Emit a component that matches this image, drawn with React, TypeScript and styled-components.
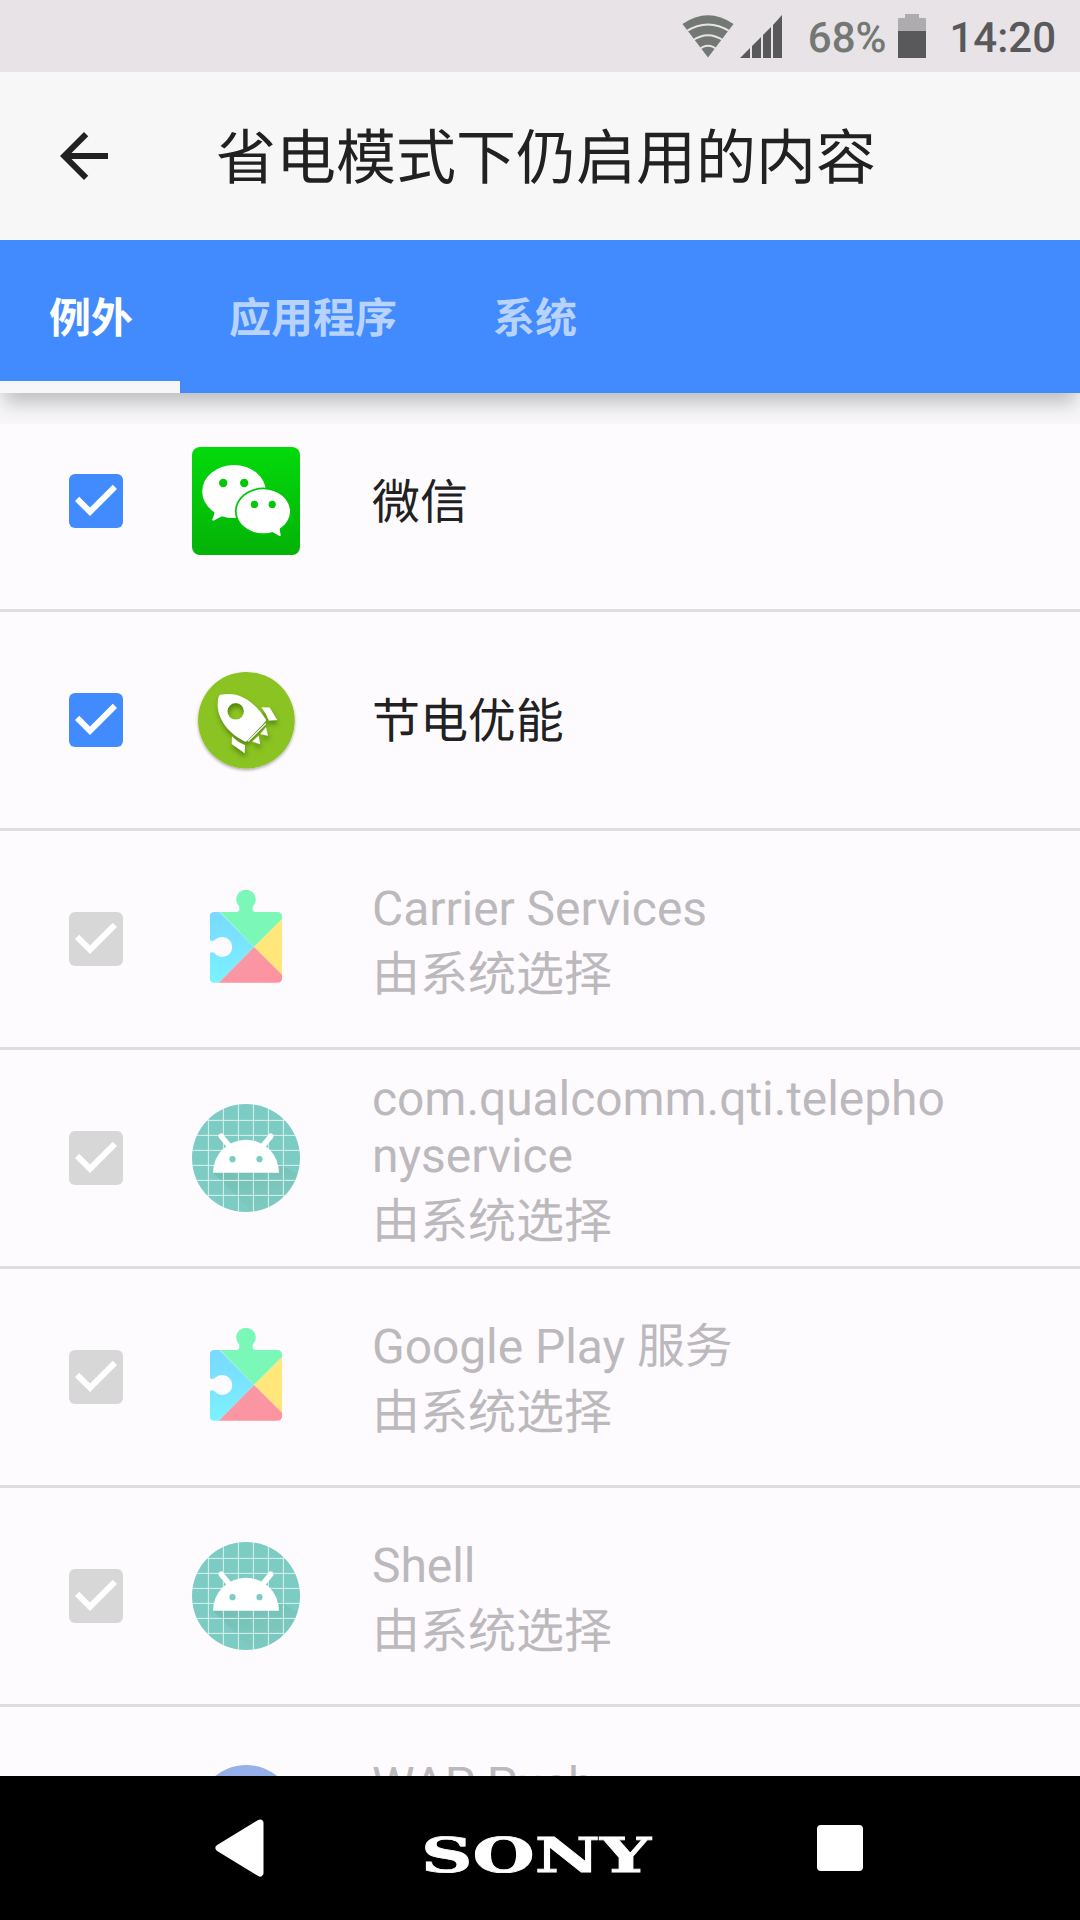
import React from 'react';
import styled, { createGlobalStyle } from 'styled-components';

const GlobalStyle = createGlobalStyle`
  *, *::before, *::after { box-sizing: border-box; }
  body {
    margin: 0;
    background: #fefbff;
    font-family: Roboto, "Noto Sans CJK SC", sans-serif;
    text-rendering: geometricPrecision;
    -webkit-font-smoothing: antialiased;
  }
`;

const Screen = styled.div`
  display: flex;
  flex-direction: column;
  width: 1080px;
  height: 1920px;
  overflow: hidden;
  background: #fefbff;
`;

const StatusBar = styled.div`
  display: flex;
  flex: none;
  align-items: center;
  height: 72px;
  padding-right: 24px;
  justify-content: flex-end;
  background: #e7e3e7;
`;

const StatusIcon = styled.svg<{ $gap: number }>`
  flex: none;
  margin-right: ${(p) => p.$gap}px;
`;

const StatusText = styled.span<{ $color: string; $gap?: number }>`
  font-size: 42px;
  font-weight: 500;
  line-height: 70px;
  padding-top: 5px;
  color: ${(p) => p.$color};
  margin-right: ${(p) => p.$gap ?? 0}px;
`;

const Toolbar = styled.header`
  display: flex;
  flex: none;
  align-items: center;
  gap: 96px;
  height: 168px;
  padding-left: 48px;
  background: #f7f7f7;
  color: #212121;
`;

const BackButton = styled.button`
  display: flex;
  padding: 0;
  border: 0;
  background: none;
  color: inherit;
`;

const Title = styled.h1`
  margin: 0;
  padding-top: 6px;
  font-size: 60px;
  font-weight: 400;
  line-height: 84px;
`;

const Tabs = styled.nav`
  position: relative;
  z-index: 1;
  display: flex;
  flex: none;
  height: 153px;
  background: #428bff;
`;

const Tab = styled.div<{ $active?: boolean }>`
  display: flex;
  align-items: center;
  padding: 18px 47px 0 49px;
  border-bottom: 12px solid ${(p) => (p.$active ? '#f7f7f7' : 'transparent')};
  font-size: 42px;
  font-weight: 700;
  line-height: 60px;
  color: ${(p) => (p.$active ? '#ffffff' : '#b9d3ff')};
`;

const TabShadow = styled.div`
  position: absolute;
  top: 100%;
  left: 0;
  right: 0;
  height: 31px;
  overflow: hidden;
  background: #f7f6f9;

  &::before {
    content: '';
    position: absolute;
    left: 4px;
    right: 4px;
    top: -60px;
    height: 60px;
    box-shadow: 0 10px 18px rgba(0, 0, 0, 0.23);
  }
`;

const List = styled.main`
  flex: 1;
  min-height: 0;
  overflow: hidden;
`;

const Row = styled.div`
  display: flex;
  align-items: center;
  height: 219px;
  padding: 0 120px 0 69px;
  border-bottom: 3px solid #dfdde0;
`;

const CheckBox = styled.span<{ $disabled: boolean }>`
  display: flex;
  flex: none;
  width: 54px;
  height: 54px;
  margin-right: 69px;
  border-radius: 6px;
  background: ${(p) => (p.$disabled ? '#d7d7d7' : '#428bff')};
`;

const AppIcon = styled.svg`
  flex: none;
  width: 108px;
  height: 108px;
  margin-right: 72px;
  overflow: visible;
`;

const Labels = styled.div<{ $disabled: boolean }>`
  display: flex;
  flex: 1;
  flex-direction: column;
  min-width: 0;
  padding-top: ${(p) => (p.$disabled ? 0 : 3)}px;
  font-size: 48px;
  word-break: break-all;
  color: ${(p) => (p.$disabled ? '#bcb9bc' : '#212121')};
`;

const Name = styled.span`
  letter-spacing: -0.07px;
  line-height: 57px;
`;

const Summary = styled.span`
  height: 62px;
  padding-top: 14px;
  line-height: 48px;
`;

const NavBar = styled.footer`
  display: flex;
  flex: none;
  align-items: center;
  height: 144px;
  padding: 0 217px 0 215px;
  justify-content: space-between;
  background: #000000;
`;

const Recents = styled.span`
  width: 46px;
  height: 46px;
  border-radius: 4px;
  background: #ffffff;
`;

const Check = () => (
  <svg width="54" height="54" viewBox="3 3 18 18">
    <path d="M10 17l-5-5 1.41-1.41L10 14.17l7.59-7.59L19 8z" fill="#fff" />
  </svg>
);

const WeChatIcon = () => (
  <AppIcon viewBox="0 0 108 108">
    <defs>
      <linearGradient id="wechat" x1="0" y1="0" x2="0" y2="1">
        <stop offset="0" stopColor="#02da0b" />
        <stop offset="1" stopColor="#04b208" />
      </linearGradient>
    </defs>
    <rect width="108" height="108" rx="8" fill="url(#wechat)" />
    <path d="M22.7 62Q22.5 69 20 72.5Q20.6 74.3 22.3 73.3L30 69.3Q36 71.2 43 70.8L56 60L40 40Z" fill="#fff" />
    <ellipse cx="42" cy="44.4" rx="31.8" ry="26.5" fill="#fff" />
    <ellipse cx="71.3" cy="64.3" rx="28.4" ry="23.7" fill="#03c40a" />
    <ellipse cx="71.3" cy="64.3" rx="26.7" ry="22" fill="#fff" />
    <path d="M80 84.8L87.5 89Q89 89.3 88.7 87.7Q87.4 84 87.8 80L80 76Z" fill="#fff" />
    <g fill="#03c80a">
      <circle cx="31.2" cy="36" r="4.2" />
      <circle cx="52.2" cy="36" r="4.2" />
      <circle cx="62.4" cy="57.4" r="3.6" />
      <circle cx="80.2" cy="57.4" r="3.6" />
    </g>
  </AppIcon>
);

const RocketIcon = () => (
  <AppIcon viewBox="0 0 108 108">
    <defs>
      <filter id="discShadow" x="-10%" y="-10%" width="120%" height="125%">
        <feDropShadow dx="0" dy="1.5" stdDeviation="1.5" floodColor="#000" floodOpacity="0.35" />
      </filter>
      <filter id="rocketShadow" x="-20%" y="-20%" width="150%" height="150%">
        <feDropShadow dx="1" dy="4" stdDeviation="2.5" floodColor="#2c5a00" floodOpacity="0.6" />
      </filter>
    </defs>
    <circle cx="54.4" cy="54.2" r="48.3" fill="#8bc320" filter="url(#discShadow)" />
    <g fill="#fff" filter="url(#rocketShadow)">
      <path
        fillRule="evenodd"
        d="M28.5 28.8Q36 27.2 43 28.4Q61 33 73.8 53.5Q74.2 54.6 73.4 55.6L54.6 75.2Q53.6 76 52 75C38 68 26.5 55 25.7 40Q25.6 33 27 30Q27.4 29 28.5 28.8ZM43.7 37A8.3 8.3 0 1 0 43.7 53.6A8.3 8.3 0 1 0 43.7 37Z"
      />
      <path d="M69.4 41.2L77.6 41.6L85.2 54L76.8 54.4Q74.4 47.5 69.4 41.2Z" />
      <path d="M40 70.6L39.8 78L52.7 87.2L53 79.2Q45.5 76.4 40 70.6Z" />
      <path d="M60.3 75.4L66.6 69.8L68.2 78.3Z" />
      <path d="M68.3 68L74 61.2L75.9 69.8Z" />
    </g>
    <path d="M56 75.4L73.8 57.6" stroke="#fff" strokeWidth="1.3" />
  </AppIcon>
);

const PuzzleIcon = ({ id }: { id: string }) => (
  <AppIcon viewBox="0.4 0 108 108">
    <defs>
      <clipPath id={`piece-${id}`}>
        <path d="M23 27H44.5Q48.8 27 47.5 21.5A9.8 9.8 0 1 1 61.3 21.5Q60 27 64.3 27H85.5Q90.5 27 90.5 32V92.7Q90.5 97.7 85.5 97.7H23Q18 97.7 18 92.7V70Q18 66.3 22.5 67.8L24.5 69.8A10 10 0 1 0 24.5 54L22.5 55.6Q18 57.2 18 53.5V32Q18 27 23 27Z" />
      </clipPath>
      <linearGradient id={`blue-${id}`} x1="0" y1="0" x2="0" y2="1">
        <stop offset="0" stopColor="#79d5ff" />
        <stop offset="1" stopColor="#7bf2ff" />
      </linearGradient>
      <linearGradient id={`red-${id}`} x1="0" y1="0" x2="1" y2="1">
        <stop offset="0" stopColor="#f59ba6" />
        <stop offset="1" stopColor="#ff919f" />
      </linearGradient>
    </defs>
    <g clipPath={`url(#piece-${id})`}>
      <path d="M18 17L62.5 62L27 98H18Z" fill={`url(#blue-${id})`} />
      <path d="M18 0V16.6L28.4 27L62.5 62L91 33.5V0Z" fill="#7bf8b7" />
      <path d="M91 33.5L62.5 62L91 91Z" fill="#ffe77c" />
      <path d="M27 98L62.5 62L91 90.5V98Z" fill={`url(#red-${id})`} />
    </g>
  </AppIcon>
);

const gridLines = [16.4, 31.4, 46.4, 61.4, 76.4, 91.4];

const AndroidIcon = ({ id }: { id: string }) => (
  <AppIcon viewBox="0 0 108 108">
    <defs>
      <clipPath id={`disc-${id}`}>
        <circle cx="54" cy="54" r="54" />
      </clipPath>
      <linearGradient id={`cast-${id}`} x1="0" y1="0" x2="0.6" y2="1">
        <stop offset="0" stopColor="#5d9d90" stopOpacity="0.4" />
        <stop offset="1" stopColor="#7bb9a8" stopOpacity="0.1" />
      </linearGradient>
    </defs>
    <g clipPath={`url(#disc-${id})`}>
      <rect width="108" height="108" fill="#7dccc4" />
      <path d="M21 68.7L60 108H108V72L85.5 58Z" fill={`url(#cast-${id})`} />
      <g stroke="#d9f2ef" strokeWidth="1">
        {gridLines.map((v) => (
          <path key={v} d={`M${v} 0V108M0 ${v}H108`} />
        ))}
      </g>
    </g>
    <path d="M21 68.7A33 33 0 0 1 87 68.7Z" fill="#fff" />
    <path d="M29.2 32.2L38 43M78.8 32.2L70 43" stroke="#fff" strokeWidth="5.4" strokeLinecap="round" />
    <circle cx="40.5" cy="55.2" r="3.1" fill="#7dccc4" />
    <circle cx="67.5" cy="55.2" r="3.1" fill="#7dccc4" />
  </AppIcon>
);

const BlueDiscIcon = () => (
  <AppIcon viewBox="0 0 108 108">
    <circle cx="54.2" cy="53" r="49" fill="#96b1ea" />
  </AppIcon>
);

interface AppEntry {
  name: string;
  icon: React.ReactNode;
  locked?: boolean;
  summary?: string;
}

const bySystem = '由系统选择';

const apps: AppEntry[] = [
  { name: '微信', icon: <WeChatIcon /> },
  { name: '节电优能', icon: <RocketIcon /> },
  { name: 'Carrier Services', icon: <PuzzleIcon id="carrier" />, locked: true, summary: bySystem },
  { name: 'com.qualcomm.qti.telephonyservice', icon: <AndroidIcon id="telephony" />, locked: true, summary: bySystem },
  { name: 'Google Play 服务', icon: <PuzzleIcon id="play" />, locked: true, summary: bySystem },
  { name: 'Shell', icon: <AndroidIcon id="shell" />, locked: true, summary: bySystem },
  { name: 'WAP Push', icon: <BlueDiscIcon />, locked: true },
];

export default function App() {
  return (
    <>
      <GlobalStyle />
      <Screen>
        <StatusBar>
          <StatusIcon $gap={6} width="52" height="43" viewBox="0 0 52 43">
            <defs>
              <clipPath id="fan">
                <path d="M0 9Q26 -9 52 9L26 43Z" />
              </clipPath>
            </defs>
            <path d="M0.5 9Q26 -8.5 51.5 9L26 42.5Z" fill="#747874" />
            <g clipPath="url(#fan)" fill="none" stroke="#e7e3e7" strokeWidth="2">
              <path d="M4 16.5Q26 2.5 48 16.5" />
              <path d="M10 26Q26 14.5 42 26" />
              <path d="M16 35.5Q26 26 36 35.5" />
            </g>
          </StatusIcon>
          <StatusIcon $gap={26} width="42" height="43" viewBox="0 0 42 43">
            <path d="M0 43L10 33V43ZM12 31L21 22V43H12ZM23 20L31 12V43H23ZM33 10L42 0V43H33Z" fill="#59595b" />
          </StatusIcon>
          <StatusText $color="#747874" $gap={12}>68%</StatusText>
          <StatusIcon $gap={23} width="28" height="44" viewBox="0 0 28 44">
            <path d="M0 4H7V0H21V4H28V17H0Z" fill="#aeacaf" />
            <path d="M0 17H28V44H0Z" fill="#59595b" />
          </StatusIcon>
          <StatusText $color="#59595b">14:20</StatusText>
        </StatusBar>

        <Toolbar>
          <BackButton aria-label="返回">
            <svg width="72" height="72" viewBox="0 0 24 24" fill="currentColor">
              <path d="M20 11H7.83l5.59-5.59L12 4l-8 8 8 8 1.41-1.41L7.83 13H20v-2z" />
            </svg>
          </BackButton>
          <Title>省电模式下仍启用的内容</Title>
        </Toolbar>

        <Tabs>
          <Tab $active>例外</Tab>
          <Tab>应用程序</Tab>
          <Tab>系统</Tab>
          <TabShadow />
        </Tabs>

        <List>
          {apps.map((app) => (
            <Row key={app.name}>
              <CheckBox $disabled={!!app.locked}>
                <Check />
              </CheckBox>
              {app.icon}
              <Labels $disabled={!!app.locked}>
                <Name>{app.name}</Name>
                {app.locked && <Summary>{app.summary}</Summary>}
              </Labels>
            </Row>
          ))}
        </List>

        <NavBar>
          <svg width="50" height="58" viewBox="0 0 50 58">
            <path d="M45 4L4 29L45 54Z" fill="#fff" stroke="#fff" strokeWidth="7" strokeLinejoin="round" />
          </svg>
          <svg width="240" height="70" viewBox="0 0 240 70">
            <text
              x="0"
              y="58.5"
              fill="#fff"
              stroke="#fff"
              strokeWidth="0.8"
              fontFamily="DejaVu Serif, serif"
              fontWeight="700"
              fontSize="48"
              textLength="230"
              lengthAdjust="spacingAndGlyphs"
            >
              SONY
            </text>
          </svg>
          <Recents />
        </NavBar>
      </Screen>
    </>
  );
}
